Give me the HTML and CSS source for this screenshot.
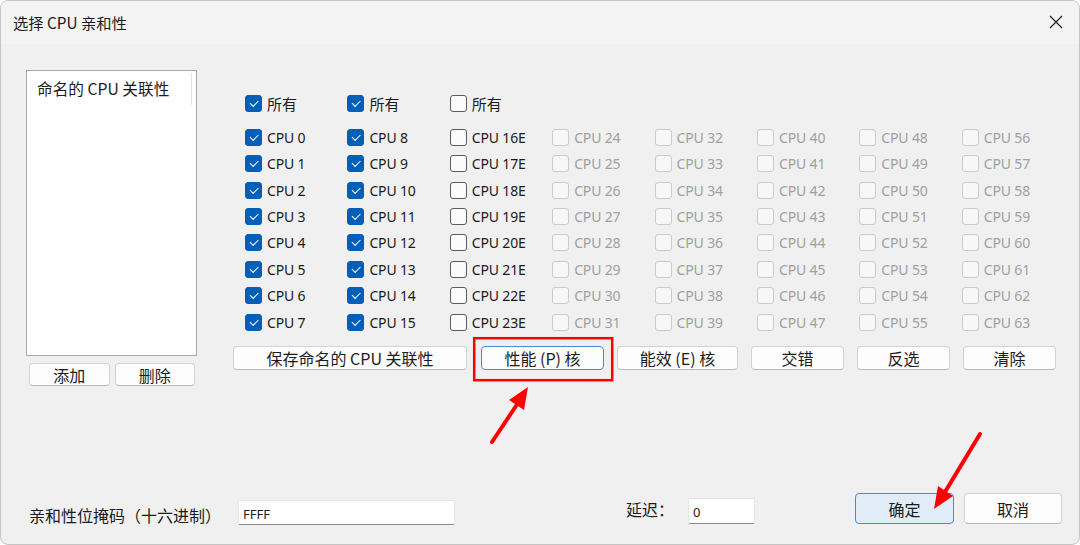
FILE: index.html
```html
<!DOCTYPE html>
<html lang="zh-CN">
<head>
<meta charset="utf-8">
<title>选择 CPU 亲和性</title>
<link rel="stylesheet" href="styles.css">
</head>
<body>
<div class="window">
  <div class="titlebar">
    <span class="title">选择 CPU 亲和性</span>
    <span class="close" aria-label="关闭">
      <svg width="14" height="14" viewBox="0 0 14 14"><path d="M1 1 L13 13 M13 1 L1 13" stroke="#1a1a1a" stroke-width="1.1" fill="none"/></svg>
    </span>
  </div>

  <div class="main">
    <div class="left">
      <div class="listbox">
        <div class="item">命名的 CPU 关联性</div>
        <div class="scrollmark"></div>
      </div>
      <div class="leftbtns">
        <button class="btn">添加</button>
        <button class="btn">删除</button>
      </div>
    </div>

    <div class="right">
      <div class="grid allrow">
        <label class="chk"><span class="cb on"></span><span class="big">所有</span></label>
        <label class="chk"><span class="cb on"></span><span class="big">所有</span></label>
        <label class="chk"><span class="cb"></span><span class="big">所有</span></label>
      </div>
      <div class="grid cpus">
        <label class="chk"><span class="cb on"></span>CPU 0</label><label class="chk"><span class="cb on"></span>CPU 8</label><label class="chk"><span class="cb"></span>CPU 16E</label><label class="chk dis"><span class="cb"></span>CPU 24</label><label class="chk dis"><span class="cb"></span>CPU 32</label><label class="chk dis"><span class="cb"></span>CPU 40</label><label class="chk dis"><span class="cb"></span>CPU 48</label><label class="chk dis"><span class="cb"></span>CPU 56</label>
        <label class="chk"><span class="cb on"></span>CPU 1</label><label class="chk"><span class="cb on"></span>CPU 9</label><label class="chk"><span class="cb"></span>CPU 17E</label><label class="chk dis"><span class="cb"></span>CPU 25</label><label class="chk dis"><span class="cb"></span>CPU 33</label><label class="chk dis"><span class="cb"></span>CPU 41</label><label class="chk dis"><span class="cb"></span>CPU 49</label><label class="chk dis"><span class="cb"></span>CPU 57</label>
        <label class="chk"><span class="cb on"></span>CPU 2</label><label class="chk"><span class="cb on"></span>CPU 10</label><label class="chk"><span class="cb"></span>CPU 18E</label><label class="chk dis"><span class="cb"></span>CPU 26</label><label class="chk dis"><span class="cb"></span>CPU 34</label><label class="chk dis"><span class="cb"></span>CPU 42</label><label class="chk dis"><span class="cb"></span>CPU 50</label><label class="chk dis"><span class="cb"></span>CPU 58</label>
        <label class="chk"><span class="cb on"></span>CPU 3</label><label class="chk"><span class="cb on"></span>CPU 11</label><label class="chk"><span class="cb"></span>CPU 19E</label><label class="chk dis"><span class="cb"></span>CPU 27</label><label class="chk dis"><span class="cb"></span>CPU 35</label><label class="chk dis"><span class="cb"></span>CPU 43</label><label class="chk dis"><span class="cb"></span>CPU 51</label><label class="chk dis"><span class="cb"></span>CPU 59</label>
        <label class="chk"><span class="cb on"></span>CPU 4</label><label class="chk"><span class="cb on"></span>CPU 12</label><label class="chk"><span class="cb"></span>CPU 20E</label><label class="chk dis"><span class="cb"></span>CPU 28</label><label class="chk dis"><span class="cb"></span>CPU 36</label><label class="chk dis"><span class="cb"></span>CPU 44</label><label class="chk dis"><span class="cb"></span>CPU 52</label><label class="chk dis"><span class="cb"></span>CPU 60</label>
        <label class="chk"><span class="cb on"></span>CPU 5</label><label class="chk"><span class="cb on"></span>CPU 13</label><label class="chk"><span class="cb"></span>CPU 21E</label><label class="chk dis"><span class="cb"></span>CPU 29</label><label class="chk dis"><span class="cb"></span>CPU 37</label><label class="chk dis"><span class="cb"></span>CPU 45</label><label class="chk dis"><span class="cb"></span>CPU 53</label><label class="chk dis"><span class="cb"></span>CPU 61</label>
        <label class="chk"><span class="cb on"></span>CPU 6</label><label class="chk"><span class="cb on"></span>CPU 14</label><label class="chk"><span class="cb"></span>CPU 22E</label><label class="chk dis"><span class="cb"></span>CPU 30</label><label class="chk dis"><span class="cb"></span>CPU 38</label><label class="chk dis"><span class="cb"></span>CPU 46</label><label class="chk dis"><span class="cb"></span>CPU 54</label><label class="chk dis"><span class="cb"></span>CPU 62</label>
        <label class="chk"><span class="cb on"></span>CPU 7</label><label class="chk"><span class="cb on"></span>CPU 15</label><label class="chk"><span class="cb"></span>CPU 23E</label><label class="chk dis"><span class="cb"></span>CPU 31</label><label class="chk dis"><span class="cb"></span>CPU 39</label><label class="chk dis"><span class="cb"></span>CPU 47</label><label class="chk dis"><span class="cb"></span>CPU 55</label><label class="chk dis"><span class="cb"></span>CPU 63</label>
      </div>
      <div class="btnrow">
        <button class="btn w-save">保存命名的 CPU 关联性</button>
        <button class="btn focus w-p">性能 (P) 核</button>
        <button class="btn w-e">能效 (E) 核</button>
        <button class="btn w-s">交错</button>
        <button class="btn w-s">反选</button>
        <button class="btn w-s">清除</button>
      </div>
    </div>
  </div>

  <div class="bottom">
    <span class="lbl mask">亲和性位掩码（十六进制）</span>
    <input class="field maskfield" value="FFFF">
    <span class="lbl delay">延迟：</span>
    <input class="field delayfield" value="0">
    <button class="btn big-btn default">确定</button>
    <button class="btn big-btn">取消</button>
  </div>

  <svg class="marks" width="1080" height="545" viewBox="0 0 1080 545">
    <rect x="474.2" y="338.2" width="138" height="42" fill="none" stroke="#f00" stroke-width="2.5"/>
    <line x1="492" y1="442" x2="518" y2="403" stroke="#f00" stroke-width="4" stroke-linecap="round"/>
    <polygon points="528,387 524,410 509,400" fill="#f00"/>
    <line x1="980" y1="434" x2="945" y2="492" stroke="#f00" stroke-width="4" stroke-linecap="round"/>
    <polygon points="934,509 938,486 953,496" fill="#f00"/>
  </svg>
</div>
</body>
</html>
```

FILE: styles.css
```css
* { box-sizing: border-box; }

html, body {
  margin: 0;
  padding: 0;
  width: 1080px;
  height: 545px;
  background: #ffffff;
  overflow: hidden;
}

body {
  font-family: "Noto Sans", "Noto Sans CJK SC", sans-serif;
  color: #1b1b1b;
}

.window {
  position: relative;
  width: 1080px;
  height: 545px;
  background: #f0f0f0;
  border: 1px solid #c4c4c4;
  border-radius: 8px;
  display: flex;
  flex-direction: column;
  overflow: hidden;
}

/* title bar */
.titlebar {
  height: 43px;
  flex: none;
  display: flex;
  align-items: center;
  justify-content: space-between;
  padding: 0 16px 0 12px;
  background: #f3f3f3;
}
.title {
  font-family: "Noto Sans CJK SC", sans-serif;
  font-size: 15.3px;
  margin-top: -1px;
}
.close {
  display: flex;
  margin-top: -2px;
}

/* main area */
.main {
  display: flex;
  padding: 26px 0 0 25px;
  gap: 36px;
}

.left {
  width: 171px;
  display: flex;
  flex-direction: column;
}
.listbox {
  position: relative;
  height: 286px;
  background: #ffffff;
  border: 1.5px solid #a5a8ad;
}
.listbox .item {
  font-family: "Noto Sans CJK SC", sans-serif;
  font-size: 15.7px;
  padding: 6px 0 0 10px;
  line-height: 24px;
}
.scrollmark {
  position: absolute;
  right: 4px;
  top: 2px;
  width: 1px;
  height: 32px;
  background: #e2e2e2;
}
.leftbtns {
  display: flex;
  gap: 5px;
  padding: 7px 2px 0 3px;
}
.leftbtns .btn {
  width: 81px;
  height: 23px;
}

.right {
  display: flex;
  flex-direction: column;
}

.grid {
  display: grid;
  grid-template-columns: repeat(8, 102.4px);
  padding-left: 12px;
}
.allrow {
  margin-top: 20px;
  height: 26px;
}
.cpus {
  margin-top: 8px;
  grid-auto-rows: 26.43px;
}

.chk {
  display: flex;
  align-items: center;
  gap: 5px;
  font-size: 14px;
  letter-spacing: -0.15px;
  color: #1b1b1b;
  white-space: nowrap;
}
.chk .big {
  font-family: "Noto Sans CJK SC", sans-serif;
  font-size: 15px;
  letter-spacing: 0;
}
.chk.dis {
  color: #a0a0a0;
}

.cb {
  position: relative;
  flex: none;
  width: 17px;
  height: 17px;
  border: 1px solid #5c5c5c;
  border-radius: 3px;
  background: #fbfbfb;
}
.chk.dis .cb {
  border-color: #cbcbcb;
  background: #f7f7f7;
}
.cb.on {
  background: #005fb8;
  border-color: #005fb8;
}
.cb.on::after {
  content: "";
  position: absolute;
  left: 4px;
  top: 4px;
  width: 7px;
  height: 3.5px;
  border-left: 1.3px solid #ffffff;
  border-bottom: 1.3px solid #ffffff;
  transform: rotate(-45deg);
}

/* buttons */
.btn {
  font-family: "Noto Sans CJK SC", sans-serif;
  font-size: 16px;
  color: #1b1b1b;
  background: #fdfdfd;
  border: 1px solid #d3d3d3;
  border-bottom-color: #b9b9b9;
  border-radius: 4px;
  padding: 0;
  line-height: 1;
  display: flex;
  align-items: center;
  justify-content: center;
}
.btnrow {
  display: flex;
  gap: 13px;
  margin-top: 11px;
  height: 24px;
}
.btnrow .btn { height: 24px; }
.w-save { width: 234px; margin-right: 1px; }
.w-p { width: 123px; }
.w-e { width: 121px; }
.w-s { width: 93px; }
.btn.focus {
  border: 1.5px solid #3d8ee0;
  background: #fcfcfc;
}

/* bottom row */
.bottom {
  margin-top: auto;
  height: 51px;
  display: flex;
  align-items: flex-start;
  padding-left: 28px;
}
.lbl {
  font-family: "Noto Sans CJK SC", sans-serif;
  font-size: 16px;
}
.mask { margin-top: 10px; width: 209px; }
.delay { margin-top: 4px; margin-left: 171px; width: 62px; }
.field {
  font-family: "Noto Sans", sans-serif;
  font-size: 13px;
  color: #1b1b1b;
  background: #ffffff;
  border: 1px solid #e6e6e6;
  border-bottom: 1.5px solid #8a8a8a;
  border-radius: 2px;
  padding: 2px 0 0 4px;
  outline: none;
}
.maskfield { width: 217px; height: 25px; margin-top: 7px; }
.delayfield { width: 67px; height: 26px; margin-top: 5px; }
.big-btn {
  width: 99px;
  height: 31px;
  font-size: 16px;
}
.default {
  margin-left: 100px;
  background: #e0ecf8;
  border: 1.5px solid #3d8ee0;
}
.bottom .big-btn + .big-btn {
  margin-left: 10px;
  width: 98px;
}

.marks {
  position: absolute;
  left: -1px;
  top: -1px;
  pointer-events: none;
}
```
